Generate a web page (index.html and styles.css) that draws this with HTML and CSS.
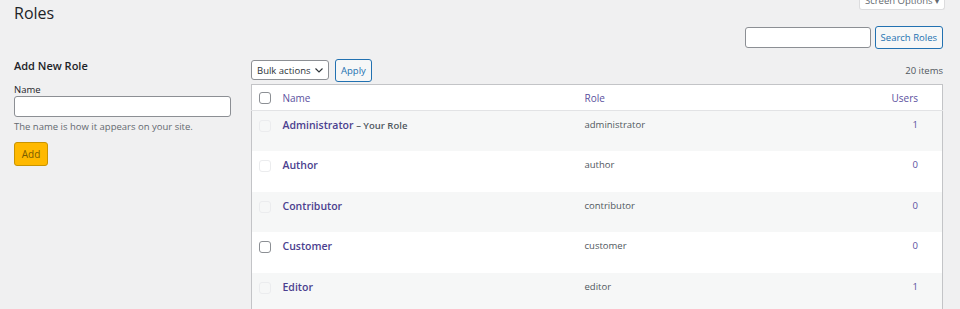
FILE: index.html
```html
<!DOCTYPE html>
<html lang="en">
<head>
  <meta charset="UTF-8">
  <title>Roles</title>
  <link rel="stylesheet" href="styles.css">
</head>
<body>
  <div class="wrap">
    <button class="screen-options">Screen Options <span class="caret">▾</span></button>
    <h1 class="page-title">Roles</h1>

    <div class="search-box">
      <input type="search" class="search-input">
      <button class="button">Search Roles</button>
    </div>

    <div class="columns">
      <div class="col-left">
        <h2 class="form-title">Add New Role</h2>
        <label class="field-label" for="role-name">Name</label>
        <input type="text" id="role-name" class="text-input">
        <p class="description">The name is how it appears on your site.</p>
        <button class="button-add">Add</button>
      </div>

      <div class="col-right">
        <div class="tablenav">
          <div class="select">Bulk actions
            <svg width="8" height="5" viewBox="0 0 8 5"><path d="M0.5 0.5 L4 4 L7.5 0.5" fill="none" stroke="#2c3338" stroke-width="1.1"/></svg>
          </div>
          <button class="button">Apply</button>
          <span class="item-count">20 items</span>
        </div>

        <table class="roles-table">
          <colgroup>
            <col class="c-cb">
            <col class="c-name">
            <col>
            <col class="c-users">
          </colgroup>
          <thead>
            <tr>
              <th><span class="checkbox"></span></th>
              <th>Name</th>
              <th>Role</th>
              <th class="num">Users</th>
            </tr>
          </thead>
          <tbody>
            <tr class="alt">
              <td><span class="checkbox disabled"></span></td>
              <td><a class="row-title">Administrator</a> <span class="own">– Your Role</span></td>
              <td class="slug">administrator</td>
              <td class="num count">1</td>
            </tr>
            <tr>
              <td><span class="checkbox disabled"></span></td>
              <td><a class="row-title">Author</a></td>
              <td class="slug">author</td>
              <td class="num count">0</td>
            </tr>
            <tr class="alt">
              <td><span class="checkbox disabled"></span></td>
              <td><a class="row-title">Contributor</a></td>
              <td class="slug">contributor</td>
              <td class="num count">0</td>
            </tr>
            <tr>
              <td><span class="checkbox"></span></td>
              <td><a class="row-title">Customer</a></td>
              <td class="slug">customer</td>
              <td class="num count">0</td>
            </tr>
            <tr class="alt">
              <td><span class="checkbox disabled"></span></td>
              <td><a class="row-title">Editor</a></td>
              <td class="slug">editor</td>
              <td class="num count">1</td>
            </tr>
          </tbody>
        </table>
      </div>
    </div>
  </div>
</body>
</html>
```

FILE: styles.css
```css
body {
  margin: 0;
  background-color: #f0f0f1;
  color: #3c434a;
  font-family: "Open Sans", "Noto Sans", sans-serif;
  font-size: 10px;
  overflow: hidden;
}

.wrap {
  position: relative;
  padding: 0 17px 0 14px;
}

.screen-options {
  position: absolute;
  top: -8px;
  right: 15px;
  width: 86px;
  height: 18px;
  background: #fff;
  border: 1px solid #dcdcde;
  border-top: none;
  border-radius: 0 0 3px 3px;
  color: #646970;
  font-family: inherit;
  font-size: 9.5px;
  line-height: 12px;
  white-space: nowrap;
  padding: 0;
}

.caret {
  font-size: 8px;
}

.page-title {
  margin: 0;
  font-size: 16px;
  font-weight: 400;
  line-height: 26px;
  color: #1d2327;
}

.search-box {
  display: flex;
  justify-content: flex-end;
  align-items: center;
  gap: 4px;
  height: 23px;
}

.search-input {
  width: 126px;
  height: 21px;
  box-sizing: border-box;
  border: 1px solid #8c8f94;
  border-radius: 3px;
  background: #fff;
}

.button {
  height: 23px;
  padding: 0 5px;
  background: #f6f7f7;
  border: 1px solid #2271b1;
  border-radius: 3px;
  color: #2271b1;
  font-family: inherit;
  font-size: 9.5px;
  white-space: nowrap;
}

.columns {
  display: grid;
  grid-template-columns: 237px 1fr;
  margin-top: 6px;
}

.form-title {
  margin: 4px 0 0;
  font-size: 11px;
  font-weight: 600;
  line-height: 14px;
  color: #1d2327;
}

.field-label {
  display: block;
  margin-top: 11px;
  line-height: 12px;
  font-size: 9.5px;
  color: #1d2327;
}

.text-input {
  display: block;
  width: 217px;
  height: 21px;
  box-sizing: border-box;
  border: 1px solid #8c8f94;
  border-radius: 3px;
  background: #fff;
}

.description {
  margin: 3px 0 0;
  line-height: 13px;
  color: #646970;
  font-size: 9.5px;
}

.button-add {
  margin-top: 9px;
  width: 34px;
  height: 24px;
  padding: 0;
  background: #ffb900;
  border: 1px solid #c99400;
  border-radius: 3px;
  color: #7a5c00;
  font-family: inherit;
  font-size: 10px;
}

.col-right {
  padding-top: 4px;
}

.tablenav {
  display: flex;
  align-items: center;
  gap: 6px;
  height: 22px;
  margin-bottom: 3px;
}

.select {
  display: flex;
  align-items: center;
  justify-content: space-between;
  height: 20px;
  box-sizing: border-box;
  padding: 0 5px;
  width: 78px;
  background: #fff;
  border: 1px solid #8c8f94;
  border-radius: 3px;
  color: #2c3338;
  white-space: nowrap;
  font-size: 9.5px;
}

.item-count {
  margin-left: auto;
  color: #50575e;
  font-size: 9.5px;
}

.roles-table {
  width: 100%;
  table-layout: fixed;
  border-collapse: collapse;
  background: #fff;
  border: 1px solid #c3c4c7;
}

.c-cb { width: 24px; }
.c-name { width: 302px; }
.c-users { width: 100px; }

.roles-table th {
  height: 25px;
  padding: 0 7px;
  text-align: left;
  font-weight: 400;
  color: #5b4f9e;
  border-bottom: 1px solid #e2e3e5;
}

.roles-table th:first-child,
.roles-table td:first-child {
  padding: 0 0 0 7px;
}

.roles-table td {
  height: 40.6px;
  box-sizing: border-box;
  padding: 7px 7px 0;
  vertical-align: top;
}

.roles-table td:first-child {
  padding-top: 9px;
}

.roles-table .num {
  text-align: right;
  padding-right: 24px;
}

.alt {
  background: #f6f7f7;
}

.checkbox {
  display: block;
  width: 10px;
  height: 10px;
  border: 1px solid #8c8f94;
  border-radius: 3px;
  background: #fff;
}

.checkbox.disabled {
  border-color: #ebecee;
  background: transparent;
}

.row-title {
  font-size: 10.5px;
  font-weight: 600;
  color: #4b3f8f;
}

.own {
  font-size: 9.5px;
  font-weight: 600;
  color: #50575e;
}

.slug {
  color: #50575e;
  font-size: 9.5px;
}

.count {
  color: #5b4f9e;
  font-size: 9.5px;
}
```
